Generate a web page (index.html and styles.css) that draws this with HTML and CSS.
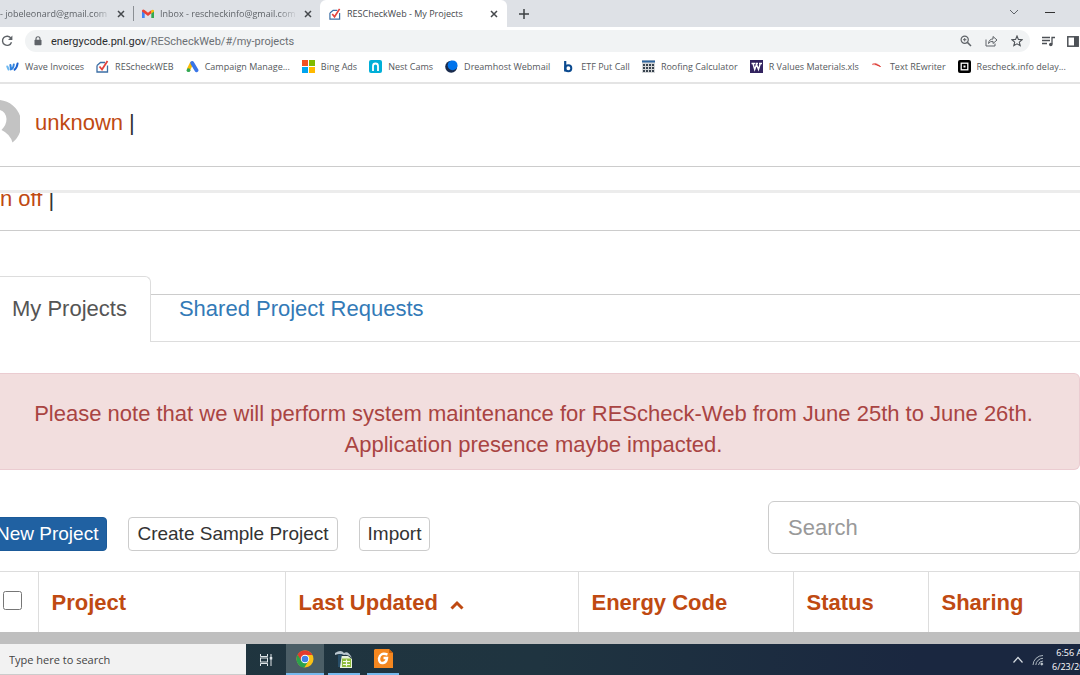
FILE: index.html
```html
<!DOCTYPE html>
<html lang="en">
<head>
  <meta charset="UTF-8" />
  <meta name="viewport" content="width=device-width, initial-scale=1.0"/>
  <title>RESCheckWeb - My Projects</title>
  <link rel="stylesheet" href="styles.css">
</head>
<body>
  <svg class="defs" aria-hidden="true">
    <symbol id="rescheck" viewBox="0 0 13 13">
      <path d="M1 5.5 L4.5 2.5 H9 M11.5 5.5 V12 H1 V5.5" fill="none" stroke="#3d6fa5" stroke-width="1.3"/>
      <path d="M3.5 6.5 L6 9.5 L11.5 1" fill="none" stroke="#e2433d" stroke-width="1.8"/>
    </symbol>
    <symbol id="close" viewBox="0 0 8 8">
      <path d="M1 1 L7 7 M7 1 L1 7" stroke="#45484c" stroke-width="1.5"/>
    </symbol>
  </svg>

  <!-- Browser -->
  <div class="tab-strip">
    <div class="tab tab-first">
      <span class="tab-title fade">- jobeleonard@gmail.com</span>
      <button class="icon-btn" aria-label="Close tab"><svg width="8" height="8"><use href="#close"/></svg></button>
    </div>
    <div class="tab tab-inbox">
      <svg width="12" height="10" viewBox="0 0 12 10">
        <path d="M0 1.5 V9 H2.7 V4z" fill="#4285f4"/>
        <path d="M12 1.5 V9 H9.3 V4z" fill="#34a853"/>
        <path d="M0 1.5 Q1 0 2.5 1 L6 3.8 L9.5 1 V4.3 L6 7 L0 2.6z" fill="#ea4335"/>
        <path d="M9.3 1.2 Q11 0 12 1.5 V2.6 L9.3 4.6z" fill="#fbbc04"/>
      </svg>
      <span class="tab-title fade">Inbox - rescheckinfo@gmail.com</span>
      <button class="icon-btn" aria-label="Close tab"><svg width="8" height="8"><use href="#close"/></svg></button>
    </div>
    <div class="tab tab-active">
      <svg width="12" height="12"><use href="#rescheck"/></svg>
      <span class="tab-title">RESCheckWeb - My Projects</span>
      <button class="icon-btn" aria-label="Close tab"><svg width="8" height="8"><use href="#close"/></svg></button>
    </div>
    <button class="icon-btn new-tab" aria-label="New tab">
      <svg width="10" height="10" viewBox="0 0 10 10"><path d="M5 0 V10 M0 5 H10" stroke="#3c4043" stroke-width="1.5"/></svg>
    </button>
    <div class="window-buttons">
      <button class="icon-btn" aria-label="Search tabs">
        <svg width="10" height="6" viewBox="0 0 10 6"><path d="M1 1 L5 5 L9 1" fill="none" stroke="#5f6368"/></svg>
      </button>
      <button class="icon-btn" aria-label="Minimize">
        <svg width="10" height="6" viewBox="0 0 10 6"><path d="M0 3.5 H10" stroke="#333"/></svg>
      </button>
    </div>
  </div>

  <div class="toolbar">
    <button class="icon-btn" aria-label="Reload">
      <svg width="12" height="12" viewBox="0 0 12 12">
        <path d="M10 3.3 A4.6 4.6 0 1 0 10.5 7.2" fill="none" stroke="#5f6368" stroke-width="1.4"/>
        <path d="M11.4 0.5 V5 H7z" fill="#5f6368"/>
      </svg>
    </button>
    <div class="omnibox">
      <svg width="8" height="10" viewBox="0 0 8 10">
        <path d="M2 4 V2.7 A2 2 0 0 1 6 2.7 V4" fill="none" stroke="#5f6368" stroke-width="1.1"/>
        <rect x="0.5" y="3.7" width="7" height="5.6" rx="0.7" fill="#5f6368"/>
      </svg>
      <span class="url"><b>energycode.pnl.gov</b>/REScheckWeb/#/my-projects</span>
      <button class="icon-btn" aria-label="Zoom">
        <svg width="12" height="12" viewBox="0 0 12 12">
          <circle cx="4.7" cy="4.7" r="3.6" fill="none" stroke="#5f6368" stroke-width="1.2"/>
          <path d="M7.4 7.4 L11 11" stroke="#5f6368" stroke-width="1.5"/>
          <path d="M4.7 3 V6.4 M3 4.7 H6.4" stroke="#5f6368"/>
        </svg>
      </button>
      <button class="icon-btn" aria-label="Share">
        <svg width="13" height="12" viewBox="0 0 13 12" fill="none" stroke="#5f6368">
          <path d="M1 4.5 V11 H10 V8.5"/>
          <path d="M3.5 8.5 Q4 4 8 4 V1.5 L12 5 L8 8.5 V6.3 Q5 6.2 3.5 8.5z"/>
        </svg>
      </button>
      <button class="icon-btn" aria-label="Bookmark">
        <svg width="12" height="12" viewBox="0 0 12 12">
          <path d="M6 1 L7.4 4.4 L11.1 4.7 L8.3 7.1 L9.2 10.7 L6 8.8 L2.8 10.7 L3.7 7.1 L0.9 4.7 L4.6 4.4z" fill="none" stroke="#4d5156" stroke-width="1.1"/>
        </svg>
      </button>
    </div>
    <button class="icon-btn" aria-label="Media">
      <svg width="13" height="11" viewBox="0 0 13 11">
        <path d="M0 1.5 H8 M0 4.5 H8 M0 7.5 H5 M10 8 V1.5 H13" fill="none" stroke="#4d5156" stroke-width="1.3"/>
        <circle cx="8.8" cy="8.5" r="1.8" fill="#4d5156"/>
      </svg>
    </button>
    <button class="icon-btn" aria-label="Side panel">
      <svg width="12" height="11" viewBox="0 0 12 11">
        <rect x="0.8" y="0.8" width="10.4" height="9.4" fill="none" stroke="#4d5156" stroke-width="1.5"/>
        <path d="M7 1 H11 V10 H7z" fill="#4d5156"/>
      </svg>
    </button>
  </div>

  <nav class="bookmarks">
    <a href="#">
      <svg width="13" height="13" viewBox="0 0 13 13" fill="none" stroke-width="2" stroke-linecap="round">
        <path d="M1.3 6.5 L2.6 9.5" stroke="#6db8f0"/>
        <path d="M4.4 5 L5 9.3 Q7.2 9 7.8 4.4" stroke="#2f83e0"/>
        <path d="M8.6 9.6 Q10.8 8.2 11.6 3.4" stroke="#1b62cf"/>
      </svg>
      Wave Invoices
    </a>
    <a href="#"><svg width="13" height="13"><use href="#rescheck"/></svg>REScheckWEB</a>
    <a href="#">
      <svg width="13" height="13" viewBox="0 0 13 13">
        <path d="M6 2.5 L2.5 9.5" stroke="#fbbc04" stroke-width="3.6"/>
        <path d="M6.2 3 L10.5 10.3" stroke="#3a76e8" stroke-width="3.8" stroke-linecap="round"/>
        <circle cx="2.5" cy="10.2" r="1.9" fill="#34a853"/>
      </svg>
      Campaign Manage...
    </a>
    <a href="#">
      <svg width="13" height="13" viewBox="0 0 13 13">
        <path d="M0 0 H6 V6 H0z" fill="#f25022"/><path d="M7 0 H13 V6 H7z" fill="#7fba00"/>
        <path d="M0 7 H6 V13 H0z" fill="#00a4ef"/><path d="M7 7 H13 V13 H7z" fill="#ffb900"/>
      </svg>
      Bing Ads
    </a>
    <a href="#">
      <svg width="13" height="13" viewBox="0 0 13 13">
        <rect width="13" height="13" rx="2" fill="#00afd8"/>
        <path d="M4 11 V6 A2.5 2.5 0 0 1 9 6 V11" fill="none" stroke="#fff" stroke-width="1.8"/>
      </svg>
      Nest Cams
    </a>
    <a href="#">
      <svg width="13" height="13" viewBox="0 0 13 13">
        <circle cx="6.2" cy="6.8" r="6" fill="#1a2b4c"/>
        <circle cx="7.6" cy="5.3" r="4.9" fill="#0073ec"/>
      </svg>
      Dreamhost Webmail
    </a>
    <a href="#">
      <svg width="13" height="13" viewBox="0 0 13 13">
        <path d="M3.2 1 V11.5" stroke="#0b4a8f" stroke-width="2.2"/>
        <circle cx="6.3" cy="8.2" r="3" fill="none" stroke="#0b4a8f" stroke-width="2"/>
      </svg>
      ETF Put Call
    </a>
    <a href="#">
      <svg width="13" height="13" viewBox="0 0 13 13">
        <rect width="13" height="13" fill="#d5d7d9"/>
        <path d="M0 1.5 H13" stroke="#2e659f" stroke-width="2"/>
        <path d="M1 5 H12 M1 8 H12 M1 11 H12" stroke="#39444f" stroke-width="2" stroke-dasharray="2 1"/>
      </svg>
      Roofing Calculator
    </a>
    <a href="#">
      <svg width="13" height="13" viewBox="0 0 13 13">
        <rect width="13" height="13" fill="#32235f"/>
        <path d="M1.5 3.5 H5 M5.5 3.5 H8 M9 3.5 H12 M3 3.5 L4.7 9.5 L6.5 4.5 L8.5 9.5 L10.3 3.5" fill="none" stroke="#fff" stroke-width="1.4"/>
      </svg>
      R Values Materials.xls
    </a>
    <a href="#">
      <svg width="13" height="13" viewBox="0 0 13 13">
        <path d="M1 4.5 Q4 1.5 9.5 6.5 Q5 4 1 4.5z" fill="#f0807c" stroke="#ef8d88"/>
        <path d="M4 4 L9.5 6.5" stroke="#d9342e"/>
      </svg>
      Text REwriter
    </a>
    <a href="#">
      <svg width="13" height="13" viewBox="0 0 13 13">
        <rect width="13" height="13" rx="2" fill="#000"/>
        <rect x="3.2" y="3.2" width="6.6" height="6.6" fill="none" stroke="#fff" stroke-width="1.3"/>
        <rect x="5.5" y="5.5" width="2" height="2" fill="#fff"/>
      </svg>
      Rescheck.info delay...
    </a>
  </nav>

  <!-- Page -->
  <main class="page">
    <div class="user-row">
      <svg class="avatar" width="20" height="52" viewBox="0 0 20 52">
        <path d="M0 3 A24 24 0 0 1 12.5 45.5 Q10 37 1.5 33 Q6.5 28 6.5 22 Q6 15 0 13z" fill="#c3c3c3"/>
      </svg>
      <a href="#">unknown</a>
      <span>|</span>
    </div>
    <div class="signoff-row">
      <a href="#">n off</a>
      <span>|</span>
    </div>

    <nav class="page-tabs">
      <a class="page-tab selected" href="#">My Projects</a>
      <a class="page-tab" href="#">Shared Project Requests</a>
    </nav>

    <div class="alert">Please note that we will perform system maintenance for REScheck-Web from June 25th to June 26th. Application presence maybe impacted.</div>

    <div class="actions">
      <button class="btn btn-primary">New Project</button>
      <button class="btn">Create Sample Project</button>
      <button class="btn">Import</button>
      <input class="search" type="text" placeholder="Search" aria-label="Search">
    </div>

    <table class="projects">
      <thead>
        <tr>
          <th class="col-check"><input type="checkbox" aria-label="Select all projects"></th>
          <th class="col-project">Project</th>
          <th class="col-updated">Last Updated
            <svg width="14" height="10" viewBox="0 0 14 10"><path d="M1.5 8.5 L7 3 L12.5 8.5" fill="none" stroke="#bf4a12" stroke-width="3"/></svg>
          </th>
          <th class="col-code">Energy Code</th>
          <th class="col-status">Status</th>
          <th class="col-sharing">Sharing</th>
        </tr>
      </thead>
    </table>
  </main>

  <!-- Windows taskbar -->
  <footer class="taskbar">
    <input class="task-search" type="text" placeholder="Type here to search" aria-label="Type here to search">
    <button class="task task-view" aria-label="Task view">
      <svg width="14" height="12" viewBox="0 0 14 12" fill="none" stroke="#dfe5e8">
        <path d="M1.5 0 V2.5 H8.5 V0 M1.5 12 V9.5 H8.5 V12"/>
        <rect x="1.5" y="4" width="7" height="4"/>
        <path d="M12 0 V12"/><path d="M12 3 V5.5" stroke-width="2.5"/>
      </svg>
    </button>
    <button class="task running focused" aria-label="Google Chrome">
      <svg width="18" height="18" viewBox="0 0 18 18">
        <circle cx="9" cy="9" r="8.5" fill="#fbc116"/>
        <path d="M9 9 L1.6 4.8 A8.5 8.5 0 0 0 8.3 17.5 L12.5 11z" fill="#2ba24c"/>
        <path d="M1.6 4.8 A8.5 8.5 0 0 1 16.4 5 H9 L5.5 11z" fill="#e33b2e"/>
        <circle cx="9" cy="9" r="4.2" fill="#fff"/>
        <circle cx="9" cy="9" r="3.3" fill="#3f7fe8"/>
      </svg>
    </button>
    <button class="task running" aria-label="LibreOffice Calc">
      <svg width="20" height="20" viewBox="0 0 20 20">
        <path d="M6 7 H14 L18 10 V19 H6z" fill="#e9f2dc"/>
        <path d="M8 9.5 H17 V18 H8z" fill="#8fbc3b"/>
        <path d="M9 12.5 H16 M9 15.5 H16 M12.5 10.5 V17.5" stroke="#f4f9e9" stroke-width="1.2"/>
        <path d="M1 4 Q7 0 10 4 Q14 1 18 9 Q13 5 10 6 Q6 4 1 6z" fill="#b9c6ce"/>
        <path d="M4 6 L8 5 L6 18 H4z" fill="#284e68"/>
      </svg>
    </button>
    <button class="task running" aria-label="PDF editor">
      <svg width="19" height="19" viewBox="0 0 19 19">
        <path d="M1 0 H15 L19 4 V19 H0 V1z" fill="#f5871f"/>
        <path d="M15 0 V4 H19z" fill="#c8620e"/>
        <path d="M13.5 5.5 Q6 3 5 9.5 Q5 14.5 9 14 Q12.5 13.5 13 9 H9.5" fill="none" stroke="#fff" stroke-width="2.4"/>
      </svg>
    </button>
    <div class="tray">
      <svg width="12" height="8" viewBox="0 0 12 8"><path d="M1.5 6.5 L6 1.5 L10.5 6.5" fill="none" stroke="#d5dbe0" stroke-width="1.2"/></svg>
      <svg width="12" height="12" viewBox="0 0 12 12" fill="none" stroke="#aeb8c1">
        <path d="M1 11 A10 10 0 0 1 11 1.5 M3.8 11 A7.3 7.3 0 0 1 11 4.3 M6.5 11 A4.6 4.6 0 0 1 11 7"/>
        <circle cx="9.8" cy="10" r="1" fill="#fff"/>
      </svg>
      <div class="clock"><span>6:56 AM</span><span>6/23/2022</span></div>
    </div>
  </footer>
</body>
</html>
```
FILE: styles.css
```css
* {
  box-sizing: border-box;
}

body {
  margin: 0;
  height: 100vh;
  display: flex;
  flex-direction: column;
  overflow: hidden;
  background: #fff;
  font-family: "Liberation Sans", Arial, sans-serif;
}

svg {
  display: block;
  flex: none;
}

a {
  text-decoration: none;
}

.defs {
  position: absolute;
  width: 0;
  height: 0;
}

.icon-btn {
  padding: 0;
  border: 0;
  background: none;
}

/* Browser */
.tab-strip,
.toolbar,
.bookmarks,
.taskbar {
  flex: none;
  display: flex;
  align-items: center;
  font-family: "Open Sans", "Noto Sans", sans-serif;
}

.tab-strip {
  height: 27px;
  background: #dee1e6;
}

.tab {
  display: flex;
  align-items: center;
  gap: 6px;
  height: 27px;
  font-size: 9px;
  color: #5f6368;
}

.tab-title {
  flex: 1;
  overflow: hidden;
  white-space: nowrap;
}

.fade {
  mask-image: linear-gradient(to right, #000 85%, transparent);
}

.tab-first {
  width: 133px;
  padding-right: 8px;
}

.tab-inbox {
  width: 187px;
  padding: 0 8px 0 9px;
}

.tab-first + .tab-inbox {
  background: linear-gradient(#8b8f94, #8b8f94) 0 6px / 1px 15px no-repeat;
}

.tab-active {
  width: 187px;
  padding: 0 9px;
  background: #fff;
  border-radius: 6px 6px 0 0;
  color: #45484c;
}

.new-tab {
  margin-left: 12px;
}

.window-buttons {
  display: flex;
  gap: 26px;
  margin: 0 25px 4px auto;
}

.toolbar {
  height: 28px;
  gap: 12px;
  padding: 0 1px;
  overflow: hidden;
}

.omnibox {
  flex: 1;
  display: flex;
  align-items: center;
  gap: 13px;
  height: 22px;
  padding: 0 7px 0 9px;
  border-radius: 11px;
  background: #f1f3f4;
}

.url {
  flex: 1;
  margin-left: -4px;
  font-family: Roboto, "Open Sans", sans-serif;
  font-size: 11px;
  color: #6b6f73;
}

.url b {
  font-weight: normal;
  color: #2b2d30;
}

.bookmarks {
  height: 29px;
  gap: 12px;
  padding: 0 6px 5px;
  border-bottom: 2px solid #e4e4e4;
}

.bookmarks a {
  display: flex;
  align-items: center;
  gap: 6px;
  white-space: nowrap;
  font-size: 9px;
  color: #55585c;
}

/* Page */
.page {
  flex: 1;
  min-height: 0;
  overflow: hidden;
  font-size: 22px;
  color: #333;
  border-bottom: 12px solid #bfbfbf;
}

.user-row {
  display: flex;
  align-items: center;
  gap: 6px;
  height: 83px;
  padding-bottom: 4px;
  border-bottom: 1px solid #ccc;
}

.user-row .avatar {
  margin-right: 9px;
}

.user-row a,
.signoff-row a {
  color: #bf4a12;
}

.signoff-row {
  display: flex;
  gap: 6px;
  height: 41px;
  margin-top: 23px;
  border-top: 3px solid #ececec;
  border-bottom: 1px solid #ccc;
  line-height: 12px;
  overflow: hidden;
}

.page-tabs {
  display: flex;
  align-items: flex-end;
  margin-top: 45px;
  line-height: 28px;
}

.page-tab {
  flex: 1;
  height: 48px;
  padding: 0 28px;
  border-top: 1px solid #ccc;
  border-bottom: 1px solid #ddd;
  color: #337ab7;
}

.page-tab.selected {
  flex: none;
  height: 66px;
  padding: 18px 23px 0 12px;
  border: 1px solid #ddd;
  border-left: 0;
  border-bottom: 0;
  border-radius: 0 6px 0 0;
  color: #555;
}

.alert {
  margin-top: 31px;
  padding: 24px 42px 9px 30px;
  border: 1px solid #ebccd1;
  border-left: 0;
  border-radius: 0 6px 6px 0;
  background: #f2dede;
  color: #a94442;
  line-height: 31px;
  text-align: center;
}

.actions {
  display: flex;
  align-items: center;
  gap: 21px;
  margin: 31px 0 17px -13px;
}

.btn {
  height: 34px;
  margin-top: 12px;
  padding: 0 8px;
  border: 1px solid #ccc;
  border-radius: 4px;
  background: #fff;
  color: #333;
  font: 19px "Liberation Sans", Arial, sans-serif;
}

.btn-primary {
  border-color: #1b5a99;
  background: #2061a2;
  color: #fff;
}

.search {
  width: 312px;
  height: 53px;
  margin-left: auto;
  padding: 0 19px;
  border: 1px solid #ccc;
  border-radius: 6px;
  font: 22px "Liberation Sans", Arial, sans-serif;
}

.search::placeholder {
  color: #999;
}

.projects {
  width: 100%;
  table-layout: fixed;
  border-collapse: collapse;
}

.projects th {
  height: 61px;
  padding: 2px 13px 0;
  border: 1px solid #ddd;
  border-left: 0;
  text-align: left;
  color: #bf4a12;
}

.projects th svg {
  display: inline-block;
  margin-left: 6px;
}

.projects .col-check {
  width: 38px;
  padding: 0 0 0 3px;
}

.col-check input {
  display: block;
  width: 19px;
  height: 19px;
  margin: 0 0 4px;
}

.col-project {
  width: 247px;
}

.col-updated {
  width: 293px;
}

.col-code {
  width: 215px;
}

.col-status {
  width: 135px;
}

/* Taskbar */
.taskbar {
  height: 31px;
  background: linear-gradient(to right, #20353e, #1f3440 50%, #1a2740 85%, #1a2740);
}

.task-search {
  width: 246px;
  height: 31px;
  padding: 0 9px;
  border: 0;
  border-bottom: 1px solid #ccc;
  background: #f2f2f2;
  font: 11px "Open Sans", "Noto Sans", sans-serif;
}

.task-search::placeholder {
  color: #444;
}

.task {
  display: grid;
  place-items: center;
  width: 32px;
  height: 31px;
  margin-right: 7px;
  padding: 0;
  border: 0;
  background: none;
}

.task-view {
  width: 40px;
  margin-right: 0;
}

.running {
  border-bottom: 2px solid #76b9ed;
}

.focused {
  width: 38px;
  margin-right: 4px;
  background: #4b5e66;
}

.tray {
  display: flex;
  align-items: center;
  gap: 8px;
  width: 68px;
  margin-left: auto;
  overflow: hidden;
}

.clock {
  flex: none;
  display: flex;
  flex-direction: column;
  align-items: center;
  font-size: 9px;
  line-height: 14px;
  color: #fff;
}
```
